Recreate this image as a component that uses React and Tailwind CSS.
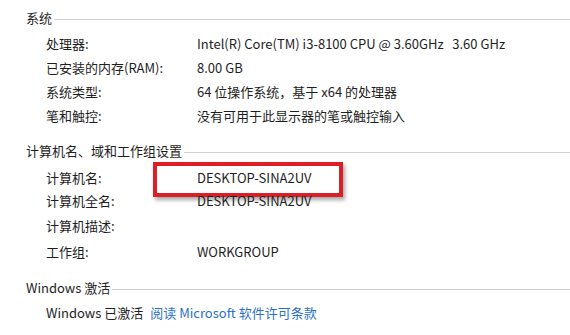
const font = { fontFamily: '"Noto Sans CJK SC", "Noto Sans", sans-serif' }

function Heading({ children }) {
  return (
    <div className="flex items-center h-4">
      <span className="whitespace-nowrap">{children}</span>
      <div className="flex-1 ml-[2px] mt-[3px] border-t border-[#d0d0d0]" />
    </div>
  )
}

function Row({ label, value, h = 'h-6', children }) {
  return (
    <div className={`flex items-center pl-5 ${h}`}>
      <div className="w-[151px] shrink-0 whitespace-nowrap">{label}</div>
      <div className="relative whitespace-nowrap">
        {value}
        {children}
      </div>
    </div>
  )
}

export default function App() {
  return (
    <div className="w-[570px] h-[335px] bg-white text-[#1e1e1e] text-[13px] leading-4 pl-[26px] pt-[10px] overflow-hidden" style={font}>
      <Heading>系统</Heading>
      <div className="mt-[6px]">
        <Row label="处理器:" value={<span>Intel(R) Core(TM) i3-8100 CPU @ 3.60GHz&nbsp;&nbsp;&nbsp;3.60 GHz</span>} />
        <Row label="已安装的内存(RAM):" value="8.00 GB" />
        <Row label="系统类型:" value="64 位操作系统，基于 x64 的处理器" />
        <Row label="笔和触控:" value="没有可用于此显示器的笔或触控输入" />
      </div>

      <div className="mt-[15px]">
        <Heading>计算机名、域和工作组设置</Heading>
      </div>
      <div className="mt-[7px]">
        <Row label="计算机名:" value="DESKTOP-SINA2UV">
          <div className="absolute left-[-44px] top-[-8px] w-[190px] h-[35px] border-4 border-[#dc1f26] shadow-[2px_3px_4px_rgba(0,0,0,0.35)]" />
        </Row>
        <Row label="计算机全名:" value="DESKTOP-SINA2UV" h="h-[22px]" />
        <Row label="计算机描述:" value="" h="h-[28px]" />
        <Row label="工作组:" value="WORKGROUP" />
      </div>

      <div className="mt-4">
        <Heading>Windows 激活</Heading>
      </div>
      <div className="mt-[5px] flex items-center h-6 pl-5 whitespace-nowrap">
        <span>Windows 已激活</span>
        <span className="ml-[7px] text-[#2a70c8]">阅读 Microsoft 软件许可条款</span>
      </div>
    </div>
  )
}
